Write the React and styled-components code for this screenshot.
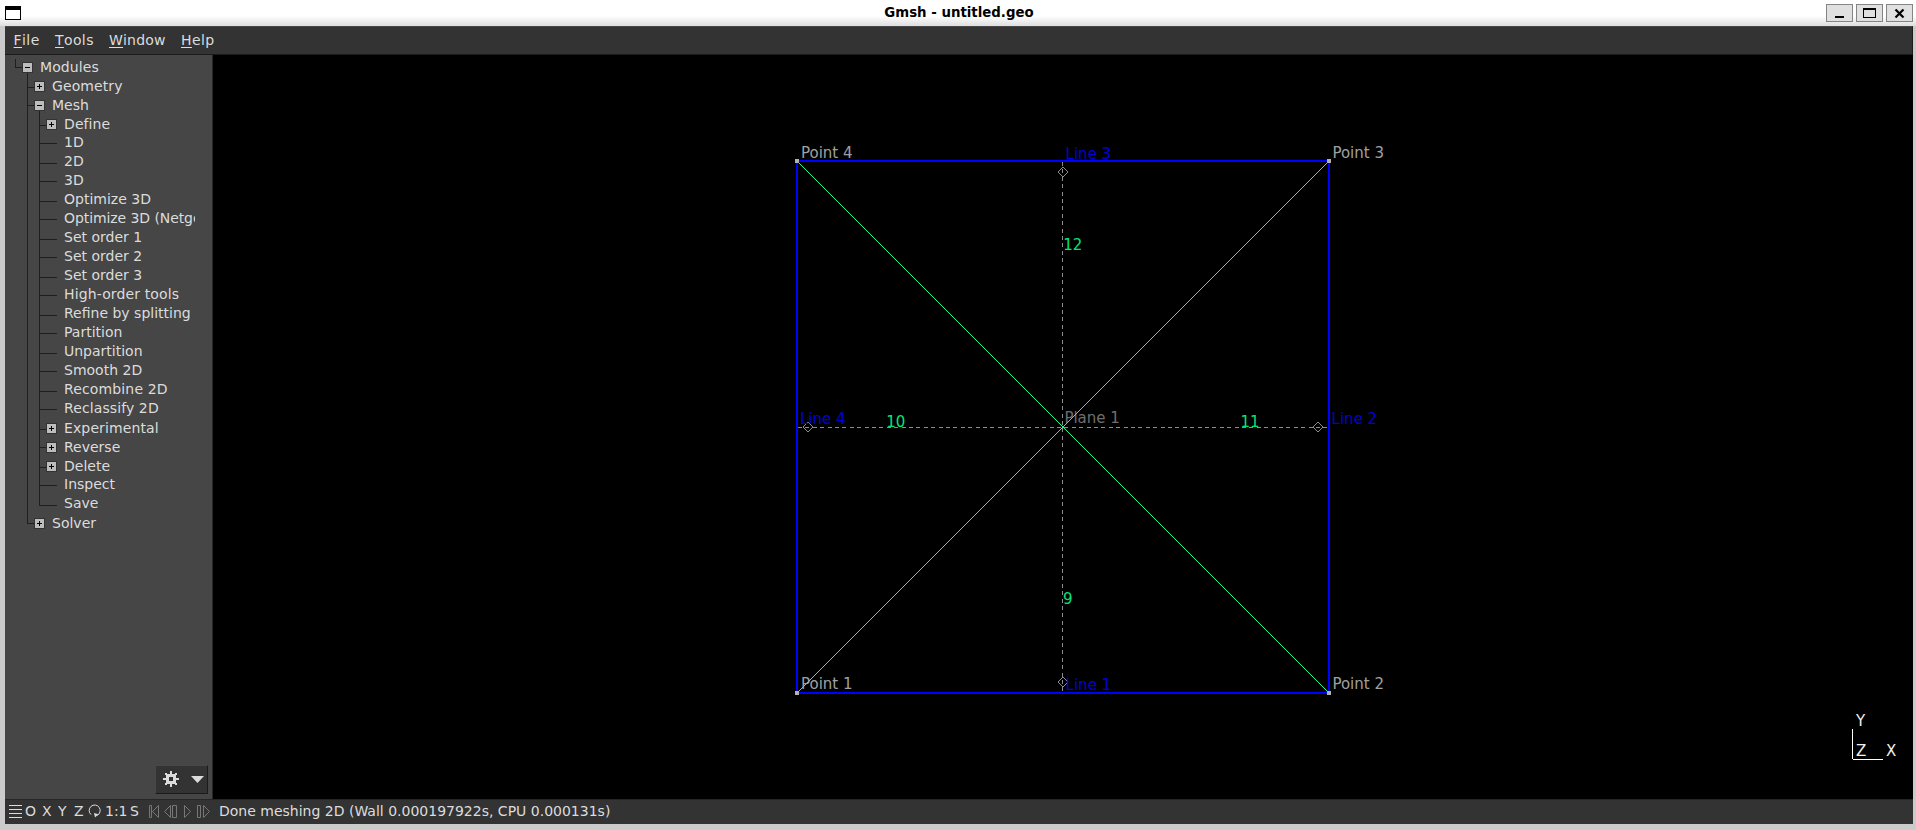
import React from "react";
import styled, { createGlobalStyle } from "styled-components";

const Global = createGlobalStyle`
  * { box-sizing: border-box; }
  html, body { margin: 0; padding: 0; overflow: hidden; background: #cbcbcb; }
  body { font-family: "DejaVu Sans", sans-serif; font-size: 14px; color: #dcdcdc; }
`;

const Frame = styled.div`
  width: 1916px;
  height: 830px;
  display: flex;
  flex-direction: column;
  background: #cbcbcb;
`;

const TitleBar = styled.header`
  height: 26px;
  flex: none;
  display: grid;
  grid-template-columns: 90px 1fr 90px;
  padding: 4px 3px 0 5px;
  background: linear-gradient(#fff 0, #fff 16px, #dedede 26px);
  color: #000;
`;

const WindowIcon = styled.div`
  width: 16px;
  height: 14px;
  margin-top: 2px;
  border: 1px solid #000;
  border-top-width: 4px;
  background: #fff;
`;

const Title = styled.h1`
  margin: 0;
  font-size: 13.33px;
  line-height: 17px;
  font-weight: bold;
  text-align: center;
`;

const WindowButtons = styled.div`
  display: flex;
  gap: 3px;
  justify-content: flex-end;
`;

const WindowButton = styled.button`
  width: 27px;
  height: 18px;
  padding: 0;
  border: 1px solid #858585;
  background: #e0e0e0;
  display: flex;
  svg { display: block; }
`;

const Body = styled.div`
  width: 1908px;
  height: 798px;
  margin-left: 5px;
  display: flex;
  flex-direction: column;
  background: #333;
`;

const MenuBar = styled.nav`
  height: 29px;
  flex: none;
  display: flex;
  padding-left: 8.6px;
  border-top: 1px solid #484848;
  border-bottom: 1px solid #1b1b1b;
  border-right: 1px solid #1b1b1b;
  line-height: 27px;
  font-kerning: none;
`;

const MenuItem = styled.span`
  width: ${(p) => p.$width}px;
  letter-spacing: ${(p) => p.$spacing}px;
`;

const Mnemonic = styled.span`
  text-decoration: underline;
  text-decoration-thickness: 1px;
  text-underline-offset: 2px;
`;

const Main = styled.div`
  height: 744px;
  flex: none;
  display: flex;
`;

const Sidebar = styled.aside`
  width: 208px;
  flex: none;
  display: flex;
  flex-direction: column;
  justify-content: space-between;
  background: #464646;
  border-right: 1px solid #262626;
  padding-top: 3px;
`;

const Tree = styled.div`
  width: 190px;
  overflow: hidden;
`;

const TreeRow = styled.div`
  height: 19px;
  display: flex;
  white-space: nowrap;
  line-height: 19px;
`;

const Guides = styled.svg`
  flex: none;
  display: block;
  width: ${(p) => p.$width}px;
  height: 19px;
  shape-rendering: crispEdges;
`;

const TreeLabel = styled.span`
  margin-top: ${(p) => (p.$leaf ? "-1px" : "0")};
  letter-spacing: ${(p) => p.$spacing || 0}px;
`;

const OptionsButton = styled.button`
  align-self: flex-end;
  width: 53px;
  height: 29px;
  margin: 0 4px 5px 0;
  padding: 0;
  border: 1px solid #484848;
  border-right-color: #1b1b1b;
  border-bottom-color: #1b1b1b;
  background: #333;
  svg { display: block; }
`;

const Viewport = styled.svg`
  display: block;
  width: 1700px;
  height: 744px;
  flex: none;
  background: #000;
  font-family: "DejaVu Sans", sans-serif;
  font-size: 15px;
`;

const StatusBar = styled.footer`
  height: 25px;
  flex: none;
  display: flex;
  border-top: 1px solid #262626;
  line-height: 23px;
`;

const StatusItem = styled.span`
  width: ${(p) => p.$width}px;
  flex: none;
  white-space: nowrap;
  svg { display: block; }
`;

const entries = [
  ["Modules", 0, "minus", 0.08],
  ["Geometry", 1, "plus", 0.1],
  ["Mesh", 1, "minus"],
  ["Define", 2, "plus", 0.1],
  ["1D", 2],
  ["2D", 2],
  ["3D", 2],
  ["Optimize 3D", 2],
  ["Optimize 3D (Netgen)", 2, null, -0.08],
  ["Set order 1", 2],
  ["Set order 2", 2],
  ["Set order 3", 2],
  ["High-order tools", 2, null, 0.13],
  ["Refine by splitting", 2],
  ["Partition", 2],
  ["Unpartition", 2],
  ["Smooth 2D", 2],
  ["Recombine 2D", 2, null, 0.14],
  ["Reclassify 2D", 2, null, 0.1],
  ["Experimental", 2, "plus", 0.12],
  ["Reverse", 2, "plus"],
  ["Delete", 2, "plus"],
  ["Inspect", 2],
  ["Save", 2],
  ["Solver", 1, "plus"],
];

function Entry({ index, label, level, box, spacing }) {
  const y = index % 2 ? 10 : 9;
  const bx = 17 + 12 * level;
  const lineX = 10 + 12 * level;
  const last = index === 0 || label === "Save" || label === "Solver";
  return (
    <TreeRow>
      <Guides $width={35 + 12 * level}>
        <g fill="#1f1f1f">
          {level === 2 && <rect x="22" y="0" width="1" height="19" />}
          <rect x={lineX} y={index === 0 ? 1 : 0} width="1" height={last ? y : 19} />
          <rect x={lineX} y={y} width={box ? 7 : 18} height="1" />
          {box === "minus" && <rect x={bx + 5} y="15" width="1" height="4" />}
        </g>
        {box && (
          <g>
            <rect x={bx} y="4" width="11" height="11" fill="#333" />
            <rect x={bx + 1} y="5" width="9" height="9" fill="#bdbdbd" />
            <rect x={bx + 3} y="9" width="5" height="1" fill="#000" />
            {box === "plus" && <rect x={bx + 5} y="7" width="1" height="5" fill="#000" />}
          </g>
        )}
      </Guides>
      <TreeLabel $leaf={!box} $spacing={spacing}>{label}</TreeLabel>
    </TreeRow>
  );
}

function Diamond({ x, y }) {
  return (
    <path
      d={`M${x - 5} ${y}L${x} ${y - 5}L${x + 5} ${y}L${x} ${y + 5}Z`}
      fill="none"
      stroke="#8c8c8c"
      shapeRendering="crispEdges"
    />
  );
}

const labels = [
  ["Point 4", 801, 158, "#a0a0a0"],
  ["Point 3", 1332.4, 158, "#a0a0a0"],
  ["Point 1", 801, 689, "#a0a0a0"],
  ["Point 2", 1332.4, 689, "#a0a0a0"],
  ["Line 3", 1065.6, 159, "#0000d8"],
  ["Line 1", 1065.6, 690, "#0000d8"],
  ["Line 4", 800, 424.4, "#0000d8"],
  ["Line 2", 1331.6, 424.4, "#0000d8"],
  ["Plane 1", 1064.4, 423, "#6e6e6e"],
  ["12", 1063.2, 250, "#00e676"],
  ["10", 886.2, 427, "#00e676"],
  ["11", 1240.4, 427, "#00e676"],
  ["9", 1063, 604, "#00e676"],
  ["Y", 1856, 726, "#f0f0f0"],
  ["Z", 1856, 756, "#f0f0f0"],
  ["X", 1886, 756, "#f0f0f0"],
];

function Scene() {
  return (
    <Viewport viewBox="213 55 1700 744">
      <g shapeRendering="crispEdges">
        <g stroke="#8c8c8c" strokeDasharray="4 3.4">
          <path d="M798 427.5H1328" />
          <path d="M1062.5 162V692" />
        </g>
        <rect x="797" y="161" width="532" height="532" fill="none" stroke="#0000ff" strokeWidth="2" />
      </g>
      <Diamond x={1063} y={172} />
      <Diamond x={1063} y={682} />
      <Diamond x={808} y={427} />
      <Diamond x={1318} y={427} />
      {labels.map(([text, x, y, fill]) => (
        <text key={text} x={x} y={y} fill={fill}>{text}</text>
      ))}
      <path d="M797 161L1329 693M797 693L1329 161" stroke="#18ff90" fill="none" shapeRendering="crispEdges" />
      <g shapeRendering="crispEdges">
        {[[795, 159], [1327, 159], [795, 691], [1327, 691]].map(([x, y]) => (
          <rect key={`${x}-${y}`} x={x} y={y} width="4" height="4" fill="#b2b2b2" />
        ))}
        <path d="M1852.5 729V759M1853 759.5H1883" stroke="#fff" />
      </g>
    </Viewport>
  );
}

const menus = [["File", 41.4, 0.4], ["Tools", 54, 0.4], ["Window", 72, 0.2], ["Help", 60, 0.4]];

export default function App() {
  return (
    <>
      <Global />
      <Frame>
        <TitleBar>
          <WindowIcon />
          <Title>Gmsh - untitled.geo</Title>
          <WindowButtons>
            <WindowButton aria-label="Minimize">
              <svg width="25" height="16" shapeRendering="crispEdges"><rect x="8" y="11" width="9" height="2" /></svg>
            </WindowButton>
            <WindowButton aria-label="Maximize">
              <svg width="25" height="16" shapeRendering="crispEdges"><path d="M6 3h13v10h-13zM7 5v7h11v-7z" fillRule="evenodd" /></svg>
            </WindowButton>
            <WindowButton aria-label="Close">
              <svg width="25" height="16"><path d="M8.5 4.5l8 8M16.5 4.5l-8 8" stroke="#000" strokeWidth="2.2" /></svg>
            </WindowButton>
          </WindowButtons>
        </TitleBar>
        <Body>
          <MenuBar>
            {menus.map(([name, width, spacing]) => (
              <MenuItem key={name} $width={width} $spacing={spacing}>
                <Mnemonic>{name[0]}</Mnemonic>{name.slice(1)}
              </MenuItem>
            ))}
          </MenuBar>
          <Main>
            <Sidebar>
              <Tree>
                {entries.map(([label, level, box, spacing], i) => (
                  <Entry key={label} index={i} label={label} level={level} box={box} spacing={spacing} />
                ))}
              </Tree>
              <OptionsButton aria-label="Options">
                <svg width="51" height="27">
                  <g shapeRendering="crispEdges" fill="#dcdcdc">
                    <path fillRule="evenodd" d="M14 5h2v3h3v-1h2v2h-1v3h3v2h-3v3h1v2h-2v-1h-3v3h-2v-3h-3v1h-2v-2h1v-3h-3v-2h3v-3h-1v-2h2v1h3zM13 11v4h4v-4z" />
                  </g>
                  <path d="M35 10h13l-6.5 7z" fill="#dcdcdc" />
                </svg>
              </OptionsButton>
            </Sidebar>
            <Scene />
          </Main>
          <StatusBar>
            <StatusItem $width={20}>
              <svg width="20" height="24"><path d="M4 5.5h13M4 9.5h13M4 13.5h13M4 17.5h13" stroke="#dcdcdc" shapeRendering="crispEdges" /></svg>
            </StatusItem>
            <StatusItem $width={17}>O</StatusItem>
            <StatusItem $width={16}>X</StatusItem>
            <StatusItem $width={16}>Y</StatusItem>
            <StatusItem $width={14}>Z</StatusItem>
            <StatusItem $width={17}>
              <svg width="17" height="24" fill="none" stroke="#dcdcdc">
                <path d="M3 14.6A5.5 5.5 0 1 1 9.2 15.4" />
                <path d="M6 13l4.4 1.2l-3.4 3.2z" fill="#dcdcdc" stroke="none" />
              </svg>
            </StatusItem>
            <StatusItem $width={25}>1:1</StatusItem>
            <StatusItem $width={18}>S</StatusItem>
            <StatusItem $width={71}>
              <svg width="70" height="24" fill="none" stroke="#777">
                <path d="M1.5 5.5h2v12h-2zM10.5 5.5v12l-6-6z" />
                <path d="M22.5 5.5v12l-6-6zM24.5 5.5h4v12h-4z" />
                <path d="M36.5 5.5v12l6-6z" />
                <path d="M49.5 5.5h3v12h-3zM55.5 5.5v12l6-6z" />
              </svg>
            </StatusItem>
            <span>Done meshing 2D (Wall 0.000197922s, CPU 0.000131s)</span>
          </StatusBar>
        </Body>
      </Frame>
    </>
  );
}
